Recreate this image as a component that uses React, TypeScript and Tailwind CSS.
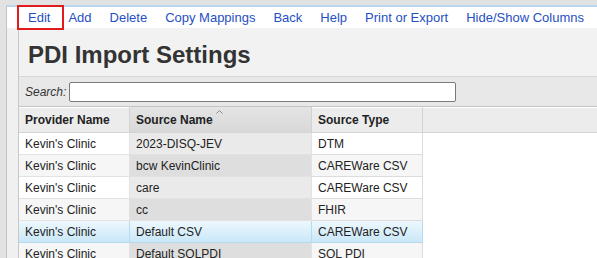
import React from "react";

const rows = [
  { p: "Kevin's Clinic", s: "2023-DISQ-JEV", t: "DTM" },
  { p: "Kevin's Clinic", s: "bcw KevinClinic", t: "CAREWare CSV" },
  { p: "Kevin's Clinic", s: "care", t: "CAREWare CSV" },
  { p: "Kevin's Clinic", s: "cc", t: "FHIR" },
  { p: "Kevin's Clinic", s: "Default CSV", t: "CAREWare CSV", sel: true },
  { p: "Kevin's Clinic", s: "Default SQLPDI", t: "SQL PDI" },
];

const menu = ["Edit", "Add", "Delete", "Copy Mappings", "Back", "Help", "Print or Export", "Hide/Show Columns"];

export default function App() {
  return (
    <div className="relative w-[597px] h-[258px] overflow-hidden bg-[#e2e2e2] pt-[5px] pl-[6px] font-['Liberation_Sans',Arial,sans-serif]">
      <div className="h-full border-l border-[#c2c2c2] border-t-2 border-t-[#b9d4ef] bg-[#f0f0f0] flex flex-col">
        <div className="h-[21px] shrink-0 bg-white flex items-center pl-[12px]">
          {menu.map((m) => (
            <span key={m} className="px-[9px] text-[13px] leading-[21px] text-[#1f50c2] whitespace-nowrap">
              {m}
            </span>
          ))}
        </div>
        <div className="ml-[11px] border-l border-[#c8c8c8] flex-1 flex flex-col">
          <div className="h-[48px] shrink-0 bg-[#f2f2f2] pt-[13px] pl-[9px]">
            <div className="text-[24px] leading-[28px] font-bold text-[#333333] whitespace-nowrap">PDI Import Settings</div>
          </div>
          <div className="h-[30px] shrink-0 border-t border-[#d6d6d6] bg-[#e8e8e8] flex items-center pl-[6px]">
            <span className="italic text-[12px] text-[#333333]">Search:</span>
            <div className="ml-[3px] w-[387px] h-[20px] bg-white border border-[#7a7a7a] rounded-[2px]" />
          </div>
          <div className="border-t border-[#c4c4c4] bg-white flex-1">
            <div className="grid grid-cols-[111px_182px_111px_1fr] h-[26px] border-b border-[#d4d4d4] text-[12px] font-bold text-[#222222]">
              <div className="border-r border-[#d2d2d2] bg-[#ececec] border-t border-t-white pl-[6px] flex items-center">Provider Name</div>
              <div className="relative border-r border-[#d2d2d2] bg-gradient-to-b from-[#e4e4e4] to-[#d8d8d8] pl-[6px] flex items-center">
                Source Name
                <svg className="absolute left-[86px] top-[3px]" width="7" height="4" viewBox="0 0 7 4">
                  <path d="M0.5 3.5 L3.5 0.5 L6.5 3.5" fill="none" stroke="#8a8a8a" strokeWidth="1" />
                </svg>
              </div>
              <div className="border-r border-[#d2d2d2] bg-[#ececec] border-t border-t-white pl-[6px] flex items-center">Source Type</div>
              <div className="bg-[#ececec] border-t border-t-white" />
            </div>
            {rows.map((r, i) => {
              const even = i % 2 === 1;
              if (r.sel) {
                return (
                  <div key={i} className="grid grid-cols-[111px_182px_111px_1fr] h-[22px] text-[12px] text-[#222222]">
                    <div className="border-r border-b border-[#b8daf0] bg-gradient-to-b from-[#eef8fd] to-[#c9e7f8] pl-[6px] flex items-center whitespace-nowrap">{r.p}</div>
                    <div className="border-r border-b border-[#b8daf0] bg-gradient-to-b from-[#eef8fd] to-[#c9e7f8] pl-[6px] flex items-center whitespace-nowrap">{r.s}</div>
                    <div className="border-r border-b border-[#b8daf0] bg-gradient-to-b from-[#eef8fd] to-[#c9e7f8] pl-[6px] flex items-center whitespace-nowrap">{r.t}</div>
                    <div className="bg-white" />
                  </div>
                );
              }
              return (
                <div key={i} className="grid grid-cols-[111px_182px_111px_1fr] h-[22px] text-[12px] text-[#222222]">
                  <div className={`border-r border-b border-[#e2e2e2] pl-[6px] flex items-center whitespace-nowrap ${even ? "bg-[#f6f6f6]" : "bg-white"}`}>{r.p}</div>
                  <div className={`border-r border-b border-[#e2e2e2] pl-[6px] flex items-center whitespace-nowrap ${even ? "bg-[#dedede]" : "bg-[#eaeaea]"}`}>{r.s}</div>
                  <div className={`border-r border-b border-[#dcdcdc] pl-[6px] flex items-center whitespace-nowrap ${even ? "bg-[#f6f6f6]" : "bg-white"}`}>{r.t}</div>
                  <div className="bg-white" />
                </div>
              );
            })}
          </div>
        </div>
      </div>
      <div className="absolute left-[17px] top-[5px] w-[47px] h-[25px] border-2 border-[#e01b1b]" />
    </div>
  );
}
